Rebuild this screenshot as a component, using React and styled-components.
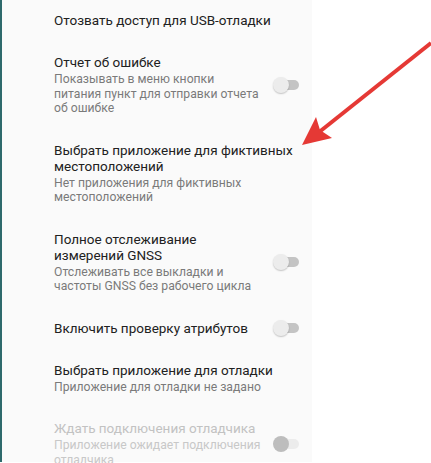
import React from 'react';
import styled, { createGlobalStyle } from 'styled-components';

const GlobalStyle = createGlobalStyle`
  html, body {
    margin: 0;
    padding: 0;
    background: #ffffff;
  }
  body {
    font-family: Roboto, "Noto Sans", "Liberation Sans", sans-serif;
  }
`;

const Page = styled.div`
  position: relative;
  width: 431px;
  height: 463px;
  overflow: hidden;
  background: #ffffff;
`;

const Screen = styled.div`
  width: 312px;
  height: 100%;
  box-sizing: border-box;
  border-left: 2px solid #2e6a6c;
  background: #fafafa;
`;

const List = styled.div`
  display: flex;
  flex-direction: column;
  margin-top: -1px;
`;

const Item = styled.div`
  display: flex;
  align-items: center;
  padding: 13px 13px 13px 52px;
`;

const Texts = styled.div`
  flex: ${p => (p.$narrow ? '0 0 207px' : '1 1 auto')};
  display: flex;
  flex-direction: column;
`;

const Title = styled.div`
  font-size: 13.5px;
  line-height: 16px;
  color: ${p => (p.$disabled ? '#c2c2c2' : '#212121')};
`;

const Summary = styled.div`
  margin-top: 2px;
  font-size: 12.2px;
  line-height: 14.5px;
  color: ${p => (p.$disabled ? '#c8c8c8' : '#7a7a7a')};
`;

const Switch = styled.div`
  position: relative;
  margin-left: auto;
  width: 26px;
  height: 16px;
  flex: none;
`;

const Track = styled.div`
  position: absolute;
  right: 0;
  top: 3px;
  width: 23px;
  height: 10px;
  border-radius: 5px;
  background: ${p => (p.$disabled ? '#ececec' : '#c4c4c4')};
`;

const Thumb = styled.div`
  position: absolute;
  left: 0;
  top: 0;
  width: 16px;
  height: 16px;
  border-radius: 50%;
  background: ${p => (p.$disabled ? '#bdbdbd' : '#ececec')};
  box-shadow: ${p => (p.$disabled ? 'none' : '0 1px 1.5px rgba(0, 0, 0, 0.22)')};
`;

const Overlay = styled.svg`
  position: absolute;
  left: 0;
  top: 0;
  pointer-events: none;
`;

const items = [
  { title: 'Отозвать доступ для USB-отладки' },
  {
    title: 'Отчет об ошибке',
    summary: 'Показывать в меню кнопки питания пункт для отправки отчета об ошибке',
    toggle: true
  },
  {
    title: 'Выбрать приложение для фиктивных местоположений',
    summary: 'Нет приложения для фиктивных местоположений'
  },
  {
    title: 'Полное отслеживание измерений GNSS',
    summary: 'Отслеживать все выкладки и частоты GNSS без рабочего цикла',
    toggle: true
  },
  { title: 'Включить проверку атрибутов', toggle: true },
  {
    title: 'Выбрать приложение для отладки',
    summary: 'Приложение для отладки не задано'
  },
  {
    title: 'Ждать подключения отладчика',
    summary: 'Приложение ожидает подключения отладчика',
    toggle: true,
    disabled: true
  }
];

function Toggle({ disabled }) {
  return (
    <Switch>
      <Track $disabled={disabled} />
      <Thumb $disabled={disabled} />
    </Switch>
  );
}

export default function App() {
  return (
    <Page>
      <GlobalStyle />
      <Screen>
        <List>
          {items.map(it => (
            <Item key={it.title}>
              <Texts $narrow={it.toggle}>
                <Title $disabled={it.disabled}>{it.title}</Title>
                {it.summary && <Summary $disabled={it.disabled}>{it.summary}</Summary>}
              </Texts>
              {it.toggle && <Toggle disabled={it.disabled} />}
            </Item>
          ))}
        </List>
      </Screen>
      <Overlay width="431" height="463" viewBox="0 0 431 463">
        <line x1="431" y1="43" x2="318" y2="133" stroke="#e53935" strokeWidth="4" />
        <polygon points="302,145 316,117 320,130 332,138" fill="#e53935" />
      </Overlay>
    </Page>
  );
}
